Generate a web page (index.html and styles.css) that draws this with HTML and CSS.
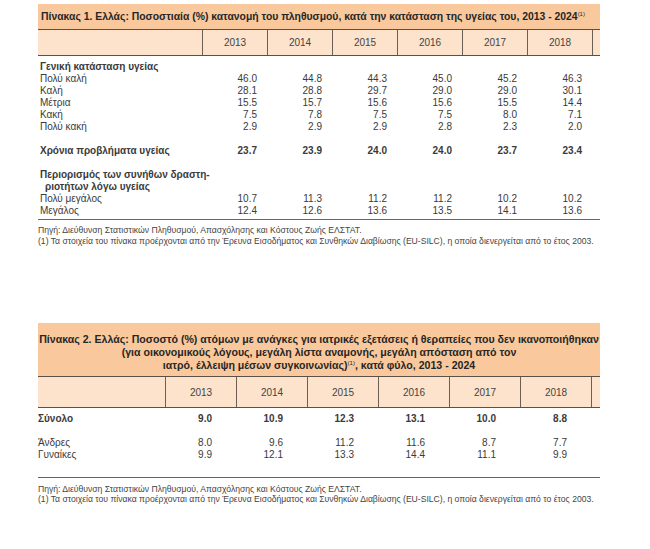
FILE: index.html
```html
<!DOCTYPE html>
<html lang="el">
<head>
<meta charset="utf-8">
<title>Πίνακες υγείας</title>
<link rel="stylesheet" href="styles.css">
</head>
<body>
<div class="page">
  <section class="tbl t1">
    <div class="title">Πίνακας 1. Ελλάς: Ποσοστιαία (%) κατανομή του πληθυσμού, κατά την κατάσταση της υγείας του, 2013 - 2024<sup>(1)</sup></div>
    <div class="row head">
      <div class="lab"></div><div>2013</div><div>2014</div><div>2015</div><div>2016</div><div>2017</div><div>2018</div><div></div>
    </div>
    <div class="body">
      <div class="row sec"><div class="lab">Γενική κατάσταση υγείας</div></div>
      <div class="row"><div class="lab">Πολύ καλή</div><div>46.0</div><div>44.8</div><div>44.3</div><div>45.0</div><div>45.2</div><div>46.3</div></div>
      <div class="row"><div class="lab">Καλή</div><div>28.1</div><div>28.8</div><div>29.7</div><div>29.0</div><div>29.0</div><div>30.1</div></div>
      <div class="row"><div class="lab">Μέτρια</div><div>15.5</div><div>15.7</div><div>15.6</div><div>15.6</div><div>15.5</div><div>14.4</div></div>
      <div class="row"><div class="lab">Κακή</div><div>7.5</div><div>7.8</div><div>7.5</div><div>7.5</div><div>8.0</div><div>7.1</div></div>
      <div class="row"><div class="lab">Πολύ κακή</div><div>2.9</div><div>2.9</div><div>2.9</div><div>2.8</div><div>2.3</div><div>2.0</div></div>
      <div class="row sec gap"><div class="lab">Χρόνια προβλήματα υγείας</div><div>23.7</div><div>23.9</div><div>24.0</div><div>24.0</div><div>23.7</div><div>23.4</div></div>
      <div class="row sec gap"><div class="lab">Περιορισμός των συνήθων δραστη-</div></div>
      <div class="row sec"><div class="lab ind">ριοτήτων λόγω υγείας</div></div>
      <div class="row"><div class="lab">Πολύ μεγάλος</div><div>10.7</div><div>11.3</div><div>11.2</div><div>11.2</div><div>10.2</div><div>10.2</div></div>
      <div class="row"><div class="lab">Μεγάλος</div><div>12.4</div><div>12.6</div><div>13.6</div><div>13.5</div><div>14.1</div><div>13.6</div></div>
    </div>
    <div class="notes">
      <p>Πηγή: Διεύθυνση Στατιστικών Πληθυσμού, Απασχόλησης και Κόστους Ζωής ΕΛΣΤΑΤ.</p>
      <p>(1) Τα στοιχεία του πίνακα προέρχονται από την Έρευνα Εισοδήματος και Συνθηκών Διαβίωσης (EU-SILC), η οποία διενεργείται από το έτος 2003.</p>
    </div>
  </section>

  <section class="tbl t2">
    <div class="title">Πίνακας 2. Ελλάς: Ποσοστό (%) ατόμων με ανάγκες για ιατρικές εξετάσεις ή θεραπείες που δεν ικανοποιήθηκαν<br>(για οικονομικούς λόγους, μεγάλη λίστα αναμονής, μεγάλη απόσταση από τον<br>ιατρό, έλλειψη μέσων συγκοινωνίας)<sup>(1)</sup>, κατά φύλο, 2013 - 2024</div>
    <div class="row head">
      <div class="lab"></div><div>2013</div><div>2014</div><div>2015</div><div>2016</div><div>2017</div><div>2018</div><div></div>
    </div>
    <div class="body">
      <div class="row sec"><div class="lab">Σύνολο</div><div>9.0</div><div>10.9</div><div>12.3</div><div>13.1</div><div>10.0</div><div>8.8</div></div>
      <div class="row gap"><div class="lab">Άνδρες</div><div>8.0</div><div>9.6</div><div>11.2</div><div>11.6</div><div>8.7</div><div>7.7</div></div>
      <div class="row"><div class="lab">Γυναίκες</div><div>9.9</div><div>12.1</div><div>13.3</div><div>14.4</div><div>11.1</div><div>9.9</div></div>
    </div>
    <div class="notes">
      <p>Πηγή: Διεύθυνση Στατιστικών Πληθυσμού, Απασχόλησης και Κόστους Ζωής ΕΛΣΤΑΤ.</p>
      <p>(1) Τα στοιχεία του πίνακα προέρχονται από την Έρευνα Εισοδήματος και Συνθηκών Διαβίωσης (EU-SILC), η οποία διενεργείται από το έτος 2003.</p>
    </div>
  </section>
</div>
</body>
</html>
```
FILE: styles.css
```css
html, body {
  margin: 0;
  padding: 0;
  background: #ffffff;
}
.page {
  padding: 4px 0 0 38px;
  font-family: "Liberation Sans", Arial, sans-serif;
  color: #333;
  font-size: 10px;
}
.tbl {
  width: 562px;
}
.t2 {
  margin-top: 76px;
}
.title {
  background: #f9c99d;
  color: #262626;
  font-weight: bold;
  font-size: 10.4px;
  border-bottom: 1.5px solid #5a5048;
}
.t1 .title {
  height: 25px;
  line-height: 25px;
  padding-left: 3px;
  white-space: nowrap;
}
.t2 .title {
  font-size: 10.6px;
  text-align: center;
  line-height: 13px;
  padding: 10px 0 4px;
  white-space: nowrap;
}
.title sup {
  font-size: 6px;
  font-weight: normal;
  vertical-align: 4px;
  line-height: 0;
}
.row {
  display: grid;
}
.t1 .row {
  grid-template-columns: 164px repeat(6, 65px) 8px;
}
.t2 .row {
  grid-template-columns: 127px repeat(6, 71px) 9px;
}
.head {
  background: #fde3cc;
  border-bottom: 1.5px solid #5a5048;
  color: #444;
}
.t1 .head { height: 25px; }
.t2 .head { height: 30px; }
.head > div {
  display: flex;
  align-items: center;
  justify-content: center;
}
.head > div + div {
  border-left: 1px solid #6a5e55;
}
.body {
  border-bottom: 1.5px solid #666;
}
.t1 .body {
  padding: 5px 0 2px;
}
.t2 .body {
  padding: 5px 0 16px;
}
.body .row {
  line-height: 12px;
  color: #3a3a3a;
}
.body .row > div {
  text-align: right;
  white-space: nowrap;
}
.t1 .body .row > div { padding-right: 10px; }
.t2 .body .row > div { padding-right: 24px; }
.body .row > .lab {
  text-align: left;
  padding: 0 0 0 2px;
}
.t2 .body .row > .lab { padding-left: 0; }
.body .row > .lab.ind { padding-left: 7px; }
.sec {
  font-weight: bold;
  color: #262626;
}
.t1 .gap { margin-top: 12px; }
.t2 .gap { margin-top: 12px; }
.notes {
  font-size: 8.6px;
  color: #444;
}
.t1 .notes {
  padding-top: 5px;
  line-height: 11px;
}
.t2 .notes {
  padding-top: 6px;
  line-height: 10px;
}
.notes p {
  margin: 0;
  white-space: nowrap;
}
```
